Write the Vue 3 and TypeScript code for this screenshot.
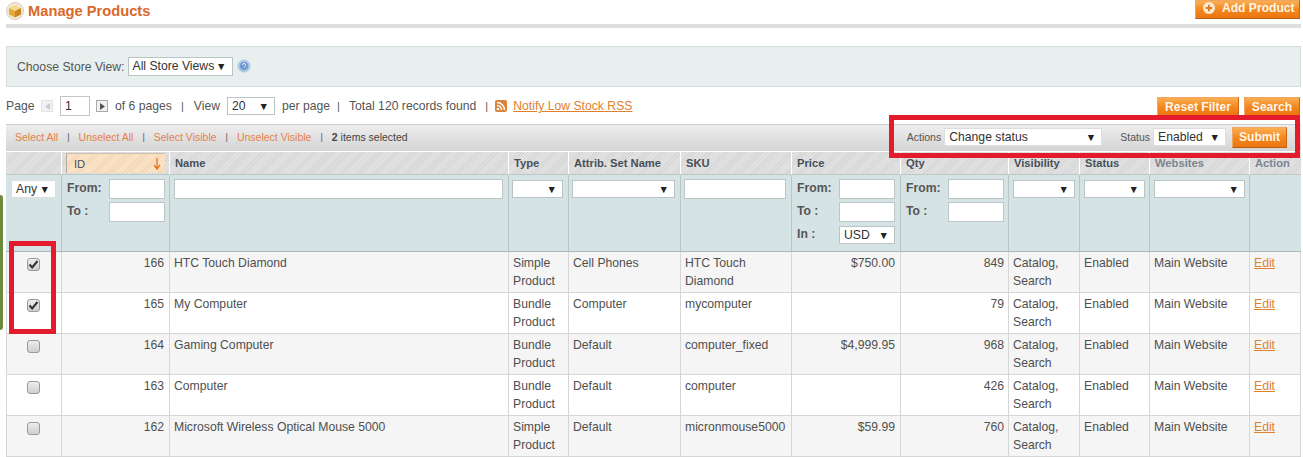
<script setup lang="ts">
interface Row { id: number; name: string; type: string[]; set: string; sku: string[]; price: string; qty: number; checked: boolean }
const widths: number[] = [55, 108, 339, 60, 112, 111, 109, 108, 71, 70, 100, 52]
const rows: Row[] = [
  { id: 166, name: 'HTC Touch Diamond', type: ['Simple', 'Product'], set: 'Cell Phones', sku: ['HTC Touch', 'Diamond'], price: '$750.00', qty: 849, checked: true },
  { id: 165, name: 'My Computer', type: ['Bundle', 'Product'], set: 'Computer', sku: ['mycomputer'], price: '', qty: 79, checked: true },
  { id: 164, name: 'Gaming Computer', type: ['Bundle', 'Product'], set: 'Default', sku: ['computer_fixed'], price: '$4,999.95', qty: 968, checked: false },
  { id: 163, name: 'Computer', type: ['Bundle', 'Product'], set: 'Default', sku: ['computer'], price: '', qty: 426, checked: false },
  { id: 162, name: 'Microsoft Wireless Optical Mouse 5000', type: ['Simple', 'Product'], set: 'Default', sku: ['micronmouse5000'], price: '$59.99', qty: 760, checked: false },
]
</script>

<template>
  <div class="page">
    <div class="sliver"></div>

    <header class="head">
      <h3 class="title">
        <svg class="cube" width="18" height="18" viewBox="0 0 18 18">
          <circle cx="9" cy="9" r="8.5" fill="#f1ead8" stroke="#d9cfb4" />
          <path d="M9 3 L15 6 L9 9 L3 6 Z" fill="#f6d98a" />
          <path d="M3 6 L9 9 V15.5 L3 12.5 Z" fill="#e3a93c" />
          <path d="M15 6 L9 9 V15.5 L15 12.5 Z" fill="#c9871f" />
        </svg>
        Manage Products
      </h3>
      <button class="btn add">
        <svg width="12" height="12" viewBox="0 0 13 13">
          <circle cx="6.5" cy="6.5" r="6.5" fill="#fde9d0" />
          <path d="M6.5 3v7M3 6.500h7" stroke="#e8751a" stroke-width="2" />
        </svg>
        <span>Add Product</span>
      </button>
    </header>

    <section class="store">
      <span class="store-label">Choose Store View:</span>
      <span class="sel store-sel">All Store Views<i>▼</i></span>
      <svg width="14" height="14" viewBox="0 0 14 14">
        <circle cx="7" cy="7" r="6.5" fill="#a9c4e4" stroke="#d3e0ee" />
        <circle cx="7" cy="7" r="4" fill="#6f9ad0" />
        <path d="M5.6 6a1.5 1.5 0 1 1 1.9 1.4V8.4" stroke="#e8f0f8" fill="none" />
      </svg>
    </section>

    <section class="pager">
      <span class="lbl-page">Page</span>
      <span class="arrow off"><svg width="5" height="7" viewBox="0 0 5 7"><path d="M5 0v7L0 3.500z" fill="#ccc" /></svg></span>
      <span class="page-input">1</span>
      <span class="arrow next"><svg width="5" height="7" viewBox="0 0 5 7"><path d="M0 0v7l5-3.500z" fill="#555" /></svg></span>
      <span class="of">of 6 pages</span>
      <span class="sep s1">|</span>
      <span>View</span>
      <span class="sel view-sel">20<i>▼</i></span>
      <span>per page</span>
      <span class="sep s2">|</span>
      <span>Total 120 records found</span>
      <span class="sep s3">|</span>
      <svg class="rss-icon" width="12" height="12" viewBox="0 0 12 12">
        <rect width="12" height="12" rx="2" fill="#d9843c" />
        <circle cx="3" cy="9" r="1.300" fill="#fff" />
        <path d="M2 5.500a4.500 4.500 0 0 1 4.500 4.500M2 2.500a7.500 7.500 0 0 1 7.500 7.500" stroke="#fff" stroke-width="1.400" fill="none" />
      </svg>
      <a class="link rss">Notify Low Stock RSS</a>
      <span class="pager-btns">
        <button class="btn reset">Reset Filter</button>
        <button class="btn search">Search</button>
      </span>
    </section>

    <section class="mass">
      <div class="mass-links">
        <a>Select All</a><span class="sep">|</span>
        <a>Unselect All</a><span class="sep">|</span>
        <a>Select Visible</a><span class="sep">|</span>
        <a>Unselect Visible</a><span class="sep">|</span>
        <span class="count"><b>2</b> items selected</span>
      </div>
      <div class="mass-form">
        <span class="mass-lbl">Actions</span>
        <span class="sel act-sel">Change status<i>▼</i></span>
        <span class="mass-lbl status-lbl">Status</span>
        <span class="sel stat-sel">Enabled<i>▼</i></span>
        <button class="btn submit">Submit</button>
      </div>
    </section>

    <table class="grid">
      <colgroup><col v-for="(w, i) in widths" :key="i" :style="{ width: w + 'px' }" /></colgroup>
      <thead>
        <tr class="hdr">
          <th></th>
          <th class="sorted">
            <div class="sort-box">
              <span>ID</span>
              <svg width="8" height="12" viewBox="0 0 8 12"><path d="M4 0v10M1 7l3 4 3-4" stroke="#e8701a" stroke-width="1.300" fill="none" /></svg>
            </div>
          </th>
          <th>Name</th><th>Type</th><th>Attrib. Set Name</th><th>SKU</th><th>Price</th><th>Qty</th>
          <th>Visibility</th><th>Status</th><th class="muted">Websites</th><th class="muted">Action</th>
        </tr>
        <tr class="filter">
          <td class="any-cell"><span class="sel any">Any<i>▼</i></span></td>
          <td>
            <div class="range"><b>From:</b><span class="inp short"></span></div>
            <div class="range"><b>To :</b><span class="inp short"></span></div>
          </td>
          <td class="pr5"><span class="inp full"></span></td>
          <td class="tight pr5"><span class="sel full"><i>▼</i></span></td>
          <td class="tight pr5"><span class="sel full"><i>▼</i></span></td>
          <td class="tight pr5"><span class="inp full"></span></td>
          <td class="pr5">
            <div class="range"><b>From:</b><span class="inp short"></span></div>
            <div class="range"><b>To :</b><span class="inp short"></span></div>
            <div class="range"><b>In :</b><span class="sel short usd">USD<i>▼</i></span></div>
          </td>
          <td>
            <div class="range"><b>From:</b><span class="inp short"></span></div>
            <div class="range"><b>To :</b><span class="inp short"></span></div>
          </td>
          <td><span class="sel full"><i>▼</i></span></td>
          <td><span class="sel full"><i>▼</i></span></td>
          <td><span class="sel full"><i>▼</i></span></td>
          <td></td>
        </tr>
      </thead>
      <tbody>
        <tr v-for="(r, i) in rows" :key="r.id" :class="{ even: i % 2 === 0 }">
          <td class="chk-cell">
            <span class="chk">
              <svg v-if="r.checked" width="11" height="11" viewBox="0 0 11 11"><path d="M1.500 5.500L4.200 8.500L9.500 2" stroke="#333" stroke-width="2" fill="none" /></svg>
            </span>
          </td>
          <td class="num pr5">{{ r.id }}</td>
          <td>{{ r.name }}</td>
          <td><div v-for="t in r.type" :key="t">{{ t }}</div></td>
          <td>{{ r.set }}</td>
          <td><div v-for="s in r.sku" :key="s">{{ s }}</div></td>
          <td class="num pr5">{{ r.price }}</td>
          <td class="num">{{ r.qty }}</td>
          <td>Catalog,<br />Search</td>
          <td>Enabled</td>
          <td>Main Website</td>
          <td><a class="link">Edit</a></td>
        </tr>
      </tbody>
    </table>

    <div class="red red-top"></div>
    <div class="red red-left"></div>
  </div>
</template>

<style>
html, body { margin: 0; background: #fff; }
</style>

<style scoped>
.page {
  position: relative;
  width: 1303px;
  height: 457px;
  overflow: hidden;
  box-sizing: border-box;
  padding: 0 2px 0 6px;
  font-family: "Liberation Sans", Arial, sans-serif;
  font-size: 12.200px;
  color: #4a4a4a;
  background: #fff;
}
.sliver {
  position: absolute;
  left: 0;
  top: 195px;
  width: 3px;
  height: 135px;
  background: #6d8a3c;
  border-radius: 0 4px 4px 0;
}
.head {
  height: 24px;
  border-bottom: 4px solid #dedede;
  display: flex;
  justify-content: space-between;
  align-items: flex-start;
  box-sizing: content-box;
}
.title {
  margin: 2px 0 0;
  display: flex;
  align-items: center;
  gap: 4px;
  font-size: 14.700px;
  line-height: 18px;
  font-weight: bold;
  color: #d9692a;
}
.btn {
  border: 1px solid #d9761c;
  border-color: #f0a560 #c9681a #b85f16 #f0a560;
  background: linear-gradient(#fbae52, #f2851c 55%, #ee7612);
  color: #fff6ea;
  font: bold 12.100px "Liberation Sans", Arial, sans-serif;
  padding: 0;
  height: 19px;
  line-height: 16px;
  white-space: nowrap;
  cursor: pointer;
}
.add {
  width: 105px;
  display: flex;
  align-items: center;
  gap: 7px;
  padding: 0 0 3px 7px;
  margin-right: 1px;
}
.store {
  margin-top: 18px;
  height: 41px;
  box-sizing: border-box;
  background: #e8f0ef;
  border: 1px solid #d5dedd;
  display: flex;
  align-items: center;
  padding-left: 10px;
  gap: 3px;
}
.store-label { color: #555; }
.sel {
  position: relative;
  display: inline-flex;
  align-items: center;
  box-sizing: border-box;
  background: #fff;
  border: 1px solid #b9c4c4;
  height: 18px;
  padding-left: 4px;
  color: #333;
  font-size: 12.200px;
}
.sel i {
  position: absolute;
  right: 5px;
  top: 2px;
  font-style: normal;
  font-size: 10.500px;
  line-height: 13px;
  color: #222;
}
.store-sel { width: 105px; margin-right: 1px; height: 19px; margin-top: -1px; }
.store svg { margin-top: -1px; }
.pager {
  height: 37px;
  box-sizing: border-box;
  padding-top: 1px;
  display: flex;
  align-items: center;
  color: #555;
  position: relative;
}
.lbl-page { width: 35px; }
.arrow {
  width: 12px;
  height: 12px;
  box-sizing: border-box;
  border: 1px solid #aaa;
  background: #f2f2f2;
  display: flex;
  align-items: center;
  justify-content: center;
}
.arrow.off { border-color: #e2e2e2; }
.page-input {
  width: 30px;
  height: 20px;
  box-sizing: border-box;
  border: 1px solid #c4c4c4;
  padding: 2px 4px;
  color: #333;
  margin: 0 6px 0 7px;
}
.of { margin-left: 7px; }
.sep { color: #555; font-size: 11px; }
.s1 { margin: 0 10px 0 9px; }
.view-sel { width: 48px; margin: 0 7px; }
.s2 { margin: 0 9px 0 7px; }
.s3 { margin: 0 7px 0 9px; }
.rss-icon { margin-right: 6px; }
.pager-btns {
  position: absolute;
  right: 1px;
  top: 10px;
  display: flex;
  gap: 5px;
}
.reset { width: 82px; }
.search { width: 56px; }
.link { color: #e0812f; text-decoration: underline; }
.mass {
  height: 27px;
  box-sizing: border-box;
  border-top: 1px solid #ccc;
  background: linear-gradient(#eeeeee, #d4d4d4);
  display: flex;
  justify-content: space-between;
  align-items: center;
  padding: 0 0 2px 9px;
  font-size: 10.500px;
}
.mass-links { display: flex; align-items: center; }
.mass-links a { color: #e4824a; }
.mass-links .sep { margin: 0 9px; font-size: 9px; }
.count { color: #444; }
.mass-form { display: flex; align-items: center; padding-right: 14px; }
.mass-lbl { color: #555; margin-right: 3px; font-size: 10.500px; }
.status-lbl { margin-left: 18px; }
.act-sel { width: 158px; border: 1px solid #ddd; }
.stat-sel { width: 73px; border: 1px solid #ddd; }
.submit { width: 55px; height: 21px; margin-left: 6px; }
.grid {
  table-layout: fixed;
  border-collapse: separate;
  border-spacing: 0;
  width: 1295px;
  margin-top: 1px;
  font-size: 12.200px;
}
.hdr th {
  height: 23px;
  box-sizing: border-box;
  padding: 0 5px;
  text-align: left;
  font-size: 11.200px;
  font-weight: bold;
  color: #47505a;
  border-left: 1px solid #fff;
  border-bottom: 1px solid #bcc8c8;
  background: repeating-linear-gradient(135deg, #e4e4e4 0 1px, #d6d6d6 1px 2px);
}
.hdr th:first-child { border-left: 0; }
.hdr th.muted { color: #7c8590; }
.hdr th.sorted { padding: 1px 4px 1px; }
.sort-box {
  height: 20px;
  box-sizing: border-box;
  display: flex;
  justify-content: space-between;
  align-items: center;
  padding: 0 4px 0 7px;
  border-left: 1px solid #b5a999;
  border-top: 1px solid #c9c0b0;
  background: repeating-linear-gradient(135deg, #fbe7cd 0 1px, #f4d7b2 1px 2px);
  font-weight: normal;
}
.filter td {
  height: 77px;
  box-sizing: border-box;
  vertical-align: top;
  padding: 4px;
  background: #d6e3e4;
  border-left: 1px solid #b8c6c6;
  border-bottom: 1px solid #a9b8b8;
}
.filter td:first-child { border-left: 0; }
.filter td.pr5 { padding-right: 5px; }
.filter td.tight { padding-left: 3px; }
.range {
  display: flex;
  justify-content: space-between;
  align-items: center;
  height: 20px;
  margin-bottom: 3px;
}
.range:last-child { margin-bottom: 0; }
.range b { font-weight: bold; color: #555; padding-left: 1px; margin-top: -2px; }
.inp {
  display: block;
  box-sizing: border-box;
  background: #fff;
  border: 1px solid #bcc6c6;
  height: 20px;
}
.inp.short { width: 56px; }
.full { width: 100%; display: flex; }
.filter .sel.full { margin-top: 1px; }
.usd { width: 56px; }
.any { width: 45px; margin-top: 1px; border-color: #ddd; }
.filter .any-cell { padding-left: 5px; }
tbody td {
  height: 41px;
  box-sizing: border-box;
  vertical-align: top;
  padding: 2px 4px;
  line-height: 18px;
  color: #4f4f4f;
  border-left: 1px solid #d6d6d6;
  border-bottom: 1px solid #d6d6d6;
  background: #fff;
}
tbody tr.even td { background: #f5f5f5; }
tbody td:last-child { border-right: 1px solid #d6d6d6; }
.num { text-align: right; }
tbody td.pr5 { padding-right: 5px; }
tbody td.chk-cell { text-align: center; padding: 6px 6px 0 4px; }
.chk {
  display: inline-block;
  width: 11px;
  height: 11px;
  border: 1px solid #9a9a9a;
  border-radius: 3px;
  background: linear-gradient(#ededed, #cfcfcf);
  line-height: 0;
  vertical-align: top;
}
.red {
  position: absolute;
  box-sizing: border-box;
  border: 5px solid #e31b2c;
  pointer-events: none;
}
.red-top { left: 889px; top: 115px; width: 411px; height: 43px; }
.red-left { left: 9px; top: 241px; width: 47px; height: 93px; }
</style>
